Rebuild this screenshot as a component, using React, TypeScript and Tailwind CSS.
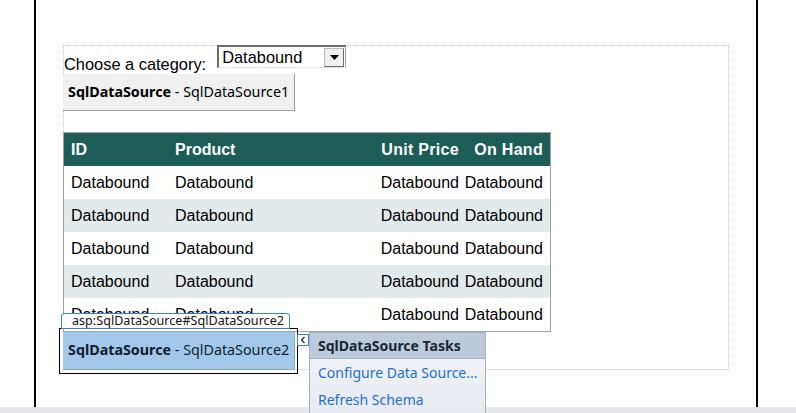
import React from "react";

const rows = [0, 1, 2, 3, 4];

export default function App() {
  return (
    <div className="relative w-[796px] h-[413px] overflow-hidden bg-white flex flex-col" style={{ fontFamily: '"Liberation Sans", Arial, sans-serif' }}>
      <div className="h-[407px] flex shrink-0">
        <div className="w-[34px] shrink-0" />
        <div className="w-[724px] h-full border-l-2 border-r-2 border-black shrink-0">
          <div className="relative z-0 ml-[27px] mt-[45px] w-[666px] h-[325px]">
            <div className="absolute inset-0 -z-10 border border-dotted border-[#c4c4c4]" />
            {/* Row 1 */}
            <div className="flex items-start h-[29px]">
              <span className="mt-[10px] ml-[1px] text-[16.4px] leading-[18px] text-black">Choose a category:</span>
              <div className="ml-[11px] w-[129px] h-[23px] flex items-center border-t-2 border-l-2 border-t-[#6a6a6a] border-l-[#6a6a6a] border-r border-b border-r-[#a0a0a0] border-b-[#e0e0e0] bg-white">
                <span className="flex-1 pl-[3px] text-[16.4px] leading-[18px] text-black">Databound</span>
                <div className="w-[20px] h-[19px] mr-[1px] bg-[#f0f0f0] border border-[#b8b8b8] border-r-[#6a6a6a] border-b-[#6a6a6a] flex items-center justify-center">
                  <svg width="9" height="5" viewBox="0 0 9 5"><path d="M0 0 H9 L4.5 5 Z" fill="#000" /></svg>
                </div>
              </div>
            </div>
            {/* SqlDataSource1 */}
            <div className="w-[232px] h-[37px] bg-[#f0f0f0] border-r border-b border-[#a0a0a0] flex items-center pl-[5px] text-[14.3px] text-black" style={{ fontFamily: '"Noto Sans", "Open Sans", sans-serif' }}>
              <span className="font-bold">SqlDataSource</span>
              <span>&nbsp;- SqlDataSource1</span>
            </div>
            {/* Table */}
            <div className="mt-[21px] w-[488px] border border-[#a0a0a0] text-[16px]">
              <div className="grid grid-cols-[104px_210px_83px_89px] h-[33px] items-center bg-[#1c5e55] text-white font-bold">
                <div className="pl-[7px]">ID</div>
                <div className="pl-[7px]">Product</div>
                <div className="text-right pr-[2px] tracking-[0.3px]">Unit Price</div>
                <div className="text-right pr-[7px] tracking-[0.3px]">On Hand</div>
              </div>
              {rows.map((r) => (
                <div key={r} className={`grid grid-cols-[104px_210px_83px_89px] h-[33px] items-center text-black ${r % 2 === 1 ? "bg-[#e3eaeb]" : "bg-white"}`}>
                  <div className="pl-[7px]">Databound</div>
                  <div className="pl-[7px]">Databound</div>
                  <div className="text-right pr-[2px]">Databound</div>
                  <div className="text-right pr-[7px]">Databound</div>
                </div>
              ))}
            </div>
            {/* SqlDataSource2 */}
            <div className="w-[232px] h-[38px] bg-[#a4c8e9] border-r border-b border-[#8aa4bc] flex items-center pl-[5px] pb-[2px] text-[14.3px] text-[#0f1f30]" style={{ fontFamily: '"Noto Sans", "Open Sans", sans-serif' }}>
              <span className="font-bold">SqlDataSource</span>
              <span>&nbsp;- SqlDataSource2</span>
            </div>
          </div>
        </div>
      </div>
      <div className="h-[6px] bg-[#e8e8ec] shrink-0" />

      {/* selection frame */}
      <div className="absolute left-[59px] top-[328px] w-[239px] h-[46px] border border-black pointer-events-none" />
      {/* tag */}
      <div className="absolute left-[61px] top-[313px] w-[229px] h-[16px] bg-white border border-[#3c7fd0] rounded-t-[3px] flex items-center pl-[10px] text-[12.6px] leading-[14px] text-[#111]" style={{ fontFamily: '"Noto Sans", "Open Sans", sans-serif' }}>
        asp:SqlDataSource#SqlDataSource2
      </div>
      {/* smart tag button */}
      <div className="absolute left-[297px] top-[334px] w-[12px] h-[12px] bg-white border border-[#3c7fd0] flex items-center justify-center">
        <svg width="6" height="8" viewBox="0 0 6 8"><path d="M4.5 1 L1.5 4 L4.5 7" fill="none" stroke="#222" strokeWidth="1.2" /></svg>
      </div>
      {/* tasks panel */}
      <div className="absolute left-[309px] top-[332px] w-[177px] h-[90px] border border-[#a7b1be] bg-gradient-to-b from-[#f3f5f9] to-[#e6e9f0] flex flex-col" style={{ fontFamily: '"Noto Sans", "Open Sans", sans-serif' }}>
        <div className="h-[26px] bg-[#bccadb] border-b border-[#a7b1be] flex items-center pl-[8px] text-[14px] font-bold text-[#1b2636]">
          SqlDataSource Tasks
        </div>
        <div className="pl-[8px] pt-0 text-[14px] leading-[27px] text-[#1e6fd0]">
          <div>Configure Data Source...</div>
          <div>Refresh Schema</div>
        </div>
      </div>
    </div>
  );
}
